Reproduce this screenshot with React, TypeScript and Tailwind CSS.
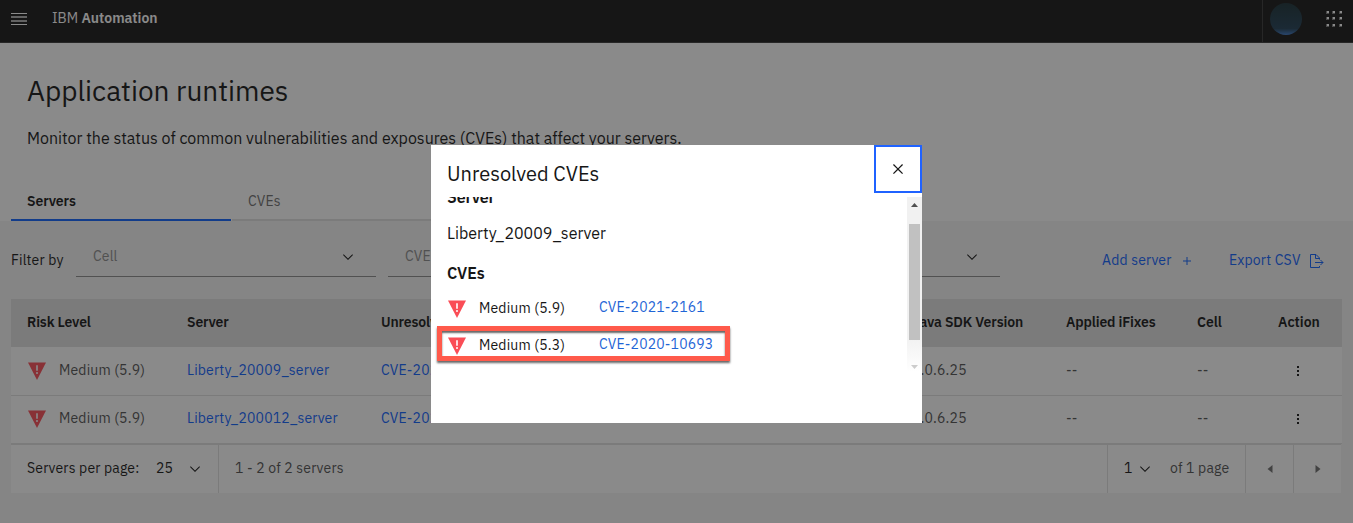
import React from 'react';

const Chevron = () => (
  <svg className="size-4 shrink-0" viewBox="0 0 16 16" fill="#161616">
    <path d="M8 11L3 6l.7-.7L8 9.6l4.3-4.3.7.7z" />
  </svg>
);

const RiskIcon = () => (
  <svg className="ml-px h-[18px] w-[18px] shrink-0" viewBox="0 0 18 18">
    <path d="M0 .5h18L9 18z" fill="#fa4d56" />
    <path d="M8.2 3.2h1.6v5.6H8.2z" fill="#fff" />
    <circle cx="9" cy="11" r="1" fill="#fff" />
  </svg>
);

const Select = ({ label }: { label: string }) => (
  <div className="flex h-10 w-[300px] items-center justify-between border-b border-[#8d8d8d] pr-5 pl-[17px]">
    <span className="text-[14px] tracking-[0.16px] text-[#8d8d8d]">{label}</span>
    <Chevron />
  </div>
);

const columns = 'grid grid-cols-[160px_194px_531px_154px_131px_81px_48px] items-center pl-4';

const Row = ({ server, last = false }: { server: string; last?: boolean }) => (
  <div
    className={`${columns} ${last ? 'h-12' : 'h-[49px]'} border-b border-[#e0e0e0] bg-white text-[14px] tracking-[0.16px] text-[#525252]`}
  >
    <div className="flex items-center gap-[13px]">
      <div className="-mt-px">
        <RiskIcon />
      </div>
      <span className="-mt-[2px]">Medium (5.9)</span>
    </div>
    <a className="-mt-[2px] tracking-[0.16px] text-[#0f62fe]">{server}</a>
    <a className="-mt-[2px] text-[#0f62fe]">CVE-2021-2161</a>
    <span className="-mt-[2px]">8.0.6.25</span>
    <span className="-mt-[2px]">--</span>
    <span className="-mt-[2px]">--</span>
    <svg className="-mt-px ml-[12px] h-4 w-4" viewBox="0 0 16 16" fill="#161616" shapeRendering="crispEdges">
      <path d="M7 3h2v2H7zM7 7h2v2H7zM7 11h2v2H7z" />
    </svg>
  </div>
);

const ModalRow = ({ score, cve }: { score: string; cve: string }) => (
  <div className="flex h-[37px] items-center tracking-[0.16px]">
    <RiskIcon />
    <span className="-mt-[2px] ml-[13px] w-[120px] text-[14px]">Medium ({score})</span>
    <a className="-mt-1 text-[14px] tracking-[0.16px] text-[#1f65d6]">{cve}</a>
  </div>
);

const dots = [0, 6, 13].flatMap((y) => [0, 6, 13].map((x) => ({ x, y })));

export default function App() {
  return (
    <div className="relative h-[523px] w-[1353px] overflow-hidden bg-[#f4f4f4] font-['IBM_Plex_Sans',Roboto,sans-serif] text-[#161616]">
      <header className="flex h-[43px] items-center border-b border-[#393939] bg-[#171717] text-white">
        <svg className="-mt-[5px] ml-[11px] h-3 w-4" viewBox="0 0 16 12" fill="#fff" shapeRendering="crispEdges">
          <path d="M0 0h16v1H0zM0 11h16v1H0z" />
          <path d="M0 3h16v2H0zM0 7h16v2H0z" opacity="0.65" />
        </svg>
        <div className="-mt-[6px] ml-[25px] text-[14px]">
          <span>IBM</span> <span className="font-semibold">Automation</span>
        </div>
        <div className="ml-auto flex h-full items-center border-l border-[#393939]">
          <div className="-mt-[4px] ml-[7px] size-8 rounded-full bg-linear-to-b from-[#1a3036] via-[#203e54] via-80% to-[#3d78c8]" />
          <svg className="-mt-[4px] mr-[11px] ml-6 size-4" viewBox="0 0 16 16" fill="#fff" shapeRendering="crispEdges">
            {dots.map(({ x, y }) => (
              <g key={`${x}-${y}`}>
                <rect x={x} y={y} width="3" height="3" opacity="0.45" />
                <rect x={x + 1} y={y} width="2" height="2" />
              </g>
            ))}
          </svg>
        </div>
      </header>

      <section className="flex h-[178px] flex-col bg-white">
        <h1 className="mt-[30px] ml-[27px] text-[28px] leading-9">Application runtimes</h1>
        <p className="mt-[17px] ml-[27px] text-[16px] leading-6">
          Monitor the status of common vulnerabilities and exposures (CVEs) that affect your servers.
        </p>
        <nav className="mt-auto ml-[11px] flex h-10 gap-px text-[14px]">
          <div className="w-[220px] border-b-2 border-[#0f62fe] px-4 pt-[10px] font-semibold tracking-[-0.1px]">Servers</div>
          <div className="w-[220px] border-b-2 border-[#e0e0e0] px-4 pt-[10px] tracking-[0.16px] text-[#6f6f6f]">CVEs</div>
        </nav>
      </section>

      <main className="ml-[11px] w-[1331px]">
        <div className="flex h-[78px] items-center">
          <span className="w-[65px] text-[14px] tracking-[0.16px]">Filter by</span>
          <div className="-mt-[6px] flex gap-3">
            <Select label="Cell" />
            <Select label="CVE" />
            <Select label="" />
          </div>
          <div className="ml-[102px] flex items-center text-[14px] tracking-[0.16px] text-[#0f62fe]">
            <span className="w-[77px]">Add server</span>
            <svg className="mt-[2px] size-4" viewBox="0 0 16 16" fill="none" stroke="#0f62fe">
              <path d="M8 4v8M4 8h8" />
            </svg>
            <span className="ml-[34px] w-[80px]">Export CSV</span>
            <svg className="mt-[1px] h-4 w-4" viewBox="0 0 16 16" fill="none" stroke="#0f62fe">
              <path d="M10.500 6.500V5L7 1.500H1.500v13h9V13M6.500 1.500v4h4M6 9.500h8M11.500 7l2.500 2.500-2.500 2.500" />
            </svg>
          </div>
        </div>

        <div className={`${columns} h-12 bg-[#e0e0e0] text-[14px] font-semibold tracking-[-0.15px]`}>
          <span className="-mt-[2px]">Risk Level</span>
          <span className="-mt-[2px]">Server</span>
          <span className="-mt-[2px]">Unresolved CVEs</span>
          <span className="-mt-[2px]">Java SDK Version</span>
          <span className="-mt-[2px]">Applied iFixes</span>
          <span className="-mt-[2px] tracking-normal">Cell</span>
          <span className="-mt-[2px] tracking-normal">Action</span>
        </div>
        <Row server="Liberty_20009_server" />
        <Row server="Liberty_200012_server" last />

        <footer className="flex h-[49px] w-[1330px] items-center border-t border-[#e0e0e0] bg-white text-[14px] tracking-[0.16px]">
          <div className="flex h-full w-[208px] items-center border-r border-[#e0e0e0] pl-4">
            <span className="-mt-[2px] w-[129px]">Servers per page:</span>
            <span className="-mt-[2px] w-[31px]">25</span>
            <Chevron />
          </div>
          <span className="-mt-[2px] ml-4 text-[#525252]">1 - 2 of 2 servers</span>
          <div className="ml-auto flex h-full items-center border-l border-[#e0e0e0] pl-4">
            <span className="-mt-[2px] w-[13px]">1</span>
            <Chevron />
            <span className="-mt-[2px] ml-[17px] w-[75px] text-[#525252]">of 1 page</span>
          </div>
          <div className="flex h-full w-12 items-center justify-center border-l border-[#e0e0e0]">
            <svg className="size-4" viewBox="0 0 16 16" fill="#6f6f6f"><path d="M10.500 4v8L5.500 8z" /></svg>
          </div>
          <div className="flex h-full w-12 items-center justify-center border-l border-[#e0e0e0]">
            <svg className="ml-px size-4" viewBox="0 0 16 16" fill="#6f6f6f"><path d="M5.500 4v8l5-4z" /></svg>
          </div>
        </footer>
      </main>

      <div className="absolute inset-0 bg-[#161616]/50" />

      <div className="absolute top-[145px] left-[431px] h-[278px] w-[491px] bg-white">
        <div className="flex h-[52px] justify-between pl-4">
          <h2 className="mt-[15px] text-[20px] leading-7">Unresolved CVEs</h2>
          <button className="flex size-12 items-center justify-center border-2 border-[#1f62ff]">
            <svg className="size-5" viewBox="0 0 32 32" fill="#161616">
              <path d="M24 9.400L22.600 8 16 14.600 9.400 8 8 9.400l6.600 6.600L8 22.600 9.400 24l6.600-6.600 6.600 6.600 1.400-1.400-6.600-6.600z" />
            </svg>
          </button>
        </div>
        <div className="flex h-[175px] justify-between overflow-hidden">
          <div className="-mt-3 pl-4 text-[16px] leading-6">
            <div className="font-semibold tracking-[-0.15px]">Server</div>
            <div className="mt-3">Liberty_20009_server</div>
            <div className="mt-4 mb-[5px] font-semibold tracking-[-0.15px]">CVEs</div>
            <ModalRow score="5.9" cve="CVE-2021-2161" />
            <ModalRow score="5.3" cve="CVE-2020-10693" />
          </div>
          <div className="flex w-[15px] flex-col items-center bg-linear-to-b from-[#f1f1f1] from-80% to-white">
            <svg className="mt-[6px] h-1 w-[7px]" viewBox="0 0 7 4" fill="#505050"><path d="M0 4h7L3.500 0z" /></svg>
            <div className="mt-[17px] h-[116px] w-[11px] bg-[#c1c1c1]" />
            <svg className="mt-[25px] h-1 w-[7px]" viewBox="0 0 7 4" fill="#ccc"><path d="M0 0h7L3.500 4z" /></svg>
          </div>
        </div>
      </div>
      <div className="absolute top-[326px] left-[437px] h-[35px] w-[293px] border-[5px] border-[#ff5a4b] shadow-[0_2px_2px_#0009,inset_0_2px_2px_#0009]" />
    </div>
  );
}
